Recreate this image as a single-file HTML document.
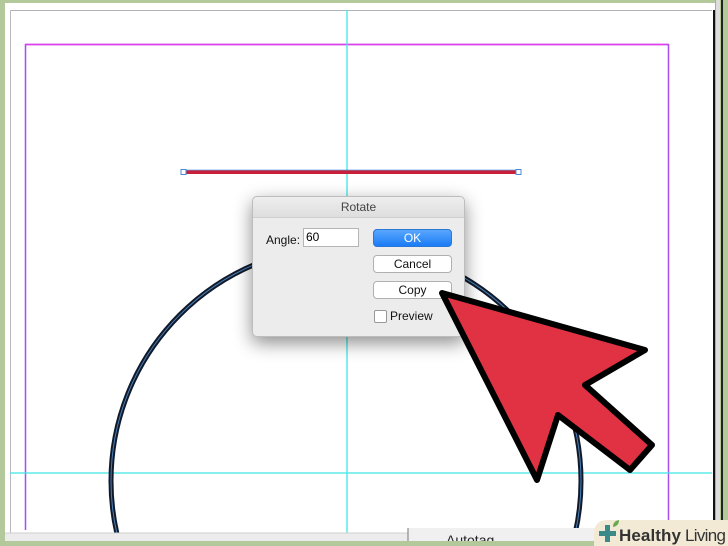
<!DOCTYPE html>
<html><head><meta charset="utf-8"><style>
html,body{margin:0;padding:0;width:728px;height:546px;overflow:hidden;}
body{position:relative;background:#b3c99b;font-family:"Liberation Sans",sans-serif;}
svg{display:block;}
.dlg{position:absolute;left:252px;top:196px;width:213px;height:141px;background:#ececec;border-radius:5px;box-shadow:0 6px 18px rgba(0,0,0,.45);border:1px solid #bdbdbd;box-sizing:border-box;}
.tb{height:20px;border-bottom:1px solid #cfcfcf;text-align:center;font-size:12px;line-height:20px;color:#444;background:linear-gradient(#eeeeee,#dedede);border-radius:5px 5px 0 0;}
.lbl{position:absolute;left:13px;top:36px;font-size:12px;color:#111;}
.inp{position:absolute;left:50px;top:31px;width:56px;height:19px;background:#fff;border:1px solid #b5b5b5;box-sizing:border-box;font-size:12px;line-height:17px;padding-left:2px;}
.btn{position:absolute;left:120px;width:79px;height:18px;background:#fff;border:1px solid #b0b0b0;border-radius:4px;box-sizing:border-box;text-align:center;font-size:12px;line-height:16px;color:#111;}
.ok{background:linear-gradient(#59a7ff,#1a7bf5);color:#fff;border-color:#2a77d8;}
.cb{position:absolute;left:121px;top:113px;width:11px;height:11px;background:#fff;border:1px solid #999;border-radius:2px;}
.pv{position:absolute;left:137px;top:112px;font-size:12px;color:#111;}
</style></head><body>
<svg width="728" height="546" style="position:absolute;left:0;top:0">
<defs><clipPath id="c"><rect x="5" y="3" width="711" height="530"/></clipPath></defs>
<rect x="5" y="3" width="711" height="538" fill="#fff"/>
<line x1="10.5" y1="10.5" x2="712" y2="10.5" stroke="#b0b0b8" stroke-width="1"/>
<line x1="10.5" y1="10.5" x2="10.5" y2="533" stroke="#b8b8c0" stroke-width="1"/>
<path d="M25.5 530 V44.5 H668.5 V530" fill="none" stroke="#a64cf0" stroke-width="1.5"/>
<path d="M25 44.5 H668" stroke="#e040e8" stroke-width="1.5"/>
<line x1="347" y1="10" x2="347" y2="533" stroke="#3ee8e8" stroke-width="1.3"/>
<line x1="10" y1="473" x2="712" y2="473" stroke="#3ee8e8" stroke-width="1.3"/>
<g clip-path="url(#c)">
<circle cx="346" cy="481" r="235" fill="none" stroke="#111a2a" stroke-width="5"/>
<circle cx="346" cy="481" r="235" fill="none" stroke="#4a80b8" stroke-width="1"/>
</g>
<rect x="5" y="533" width="711" height="8" fill="#ececec"/>
<line x1="5" y1="533" x2="716" y2="533" stroke="#cfcfcf"/>
<rect x="408" y="528" width="190" height="13" fill="#f0f0f0"/>
<line x1="408" y1="528" x2="408" y2="541" stroke="#777"/>
<text x="446" y="545" font-size="14" fill="#222" font-family="Liberation Sans">Autotag</text>
<rect x="5" y="541" width="711" height="5" fill="#b3c99b"/>
<rect x="713" y="10" width="2" height="531" fill="#111"/>
<rect x="716" y="0" width="4" height="546" fill="#ddd"/>
<rect x="715" y="0" width="1" height="546" fill="#aaa"/>
<rect x="721" y="0" width="2" height="546" fill="#222"/>
<rect x="183" y="170" width="336" height="4" fill="#c8203a"/>
<line x1="183" y1="170" x2="519" y2="170" stroke="#5aa0e0" stroke-width="0.8"/>
<rect x="181" y="169.5" width="5" height="5" fill="#fff" stroke="#4a8ad8"/>
<rect x="516" y="169.5" width="5" height="5" fill="#fff" stroke="#4a8ad8"/>
</svg>
<div class="dlg">
<div class="tb">Rotate</div>
<div class="lbl">Angle:</div>
<div class="inp">60</div>
<div class="btn ok" style="top:32px">OK</div>
<div class="btn" style="top:58px">Cancel</div>
<div class="btn" style="top:84px">Copy</div>
<div class="cb"></div>
<div class="pv">Preview</div>
</div>
<svg width="728" height="546" style="position:absolute;left:0;top:0">
<polygon points="442,293 645,350 585,385 652,445 630,470 558,415 537,480" fill="#e03242" stroke="#000" stroke-width="6" stroke-linejoin="round"/>
<path d="M594 546 V534 Q594 520 608 520 H728 V546Z" fill="#f3ead5"/>
<path d="M599 531 h6 v-6 h5 v6 h6 v5 h-6 v6 h-5 v-6 h-6z" fill="#3a8a8a"/>
<path d="M613 527 q0 -6 6 -7 q0 6 -6 7z" fill="#6aa84f"/>
<text x="619" y="541" font-size="17" font-weight="bold" fill="#333" font-family="Liberation Sans" textLength="62">Healthy</text>
<text x="685" y="541" font-size="17" fill="#333" font-family="Liberation Sans" textLength="41">Living</text>
</svg>
</body></html>
